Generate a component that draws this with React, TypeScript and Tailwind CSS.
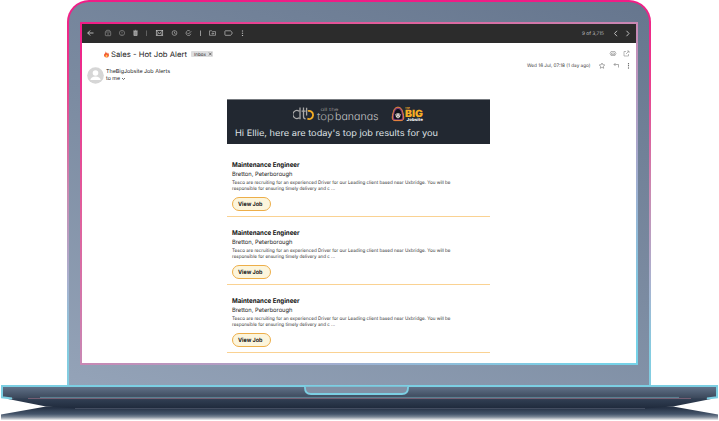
import React from "react";

const jobs = [1, 2, 3];

function Stroke({ x, y, children, o = 1 }: { x: number; y: number; children: React.ReactNode; o?: number }) {
  return (
    <g transform={`translate(${x} ${y})`} opacity={o}>
      {children}
    </g>
  );
}

function ToolbarIcons() {
  return (
    <svg width="170" height="19" viewBox="0 0 170 19" fill="none" stroke="#c4c4c4" strokeWidth="0.7">
      <Stroke x={8.5} y={9}><path d="M-2.8 0H3M-2.8 0L-.3 -2.5M-2.8 0L-.3 2.5" strokeWidth=".9" /></Stroke>
      <Stroke x={26} y={9} o={0.65}><rect x="-2.7" y="-1" width="5.4" height="3.7" rx=".5" /><path d="M-2.5 -1L-1.5 -2.7H1.5L2.5 -1M-1 1H1" /></Stroke>
      <Stroke x={40} y={9} o={0.6}><circle r="2.6" /><path d="M0 -1.4V.4M0 1V1.7" /></Stroke>
      <Stroke x={53.5} y={9} o={0.9}><path d="M-2.4 -2H2.4M-.8 -2.7H.8" /><path d="M-1.6 -1.5H1.6V2.5H-1.6Z" fill="#999" /></Stroke>
      <path d="M64.5 6.5V12" opacity=".5" />
      <Stroke x={77.5} y={9}><rect x="-3.2" y="-2.4" width="6.4" height="5" /><path d="M-3 -2L0 .5L3 -2M-3 2.3L-1 0M3 2.3L1 0" /></Stroke>
      <Stroke x={92.5} y={9} o={0.85}><circle r="2.4" /><path d="M0 -1.4V.2L1.2 .8" /></Stroke>
      <Stroke x={106.5} y={9} o={0.85}><path d="M1.4 -2.1A2.5 2.5 0 1 0 2.4 .8M-1.2 -.2L0 1L2.8 -1.8" /></Stroke>
      <path d="M118.5 6.5V12" />
      <Stroke x={130.5} y={9} o={0.85}><path d="M-3 -2.2H-.8L0 -1.4H3V2.3H-3ZM-1 .5H1.3M.3 -.5L1.3 .5L.3 1.5" /></Stroke>
      <Stroke x={146.5} y={9}><path d="M-3.1 -2.2H2Q2.6 -2.2 3.8 0Q2.6 2.3 2 2.3H-3.1Q-3.6 2.3 -3.6 1.7V-1.6Q-3.6 -2.2 -3.1 -2.2Z" /></Stroke>
      <path d="M160.5 6.5V7.6M160.5 8.7V9.8M160.5 10.9V12" strokeWidth="1.2" />
    </svg>
  );
}

function BananasLogo() {
  return (
    <svg width="86" height="20" viewBox="0 0 86 20" className="block [font-feature-settings:'cv11']">
      <g fill="none" strokeWidth="1.3">
        <path d="M6.2 5.2A4 4 0 1 0 6.2 11.8M7 1.5V13.2M10.5 1.5V10.4Q10.5 12.8 12.6 12.8M8.6 5.2H12.6M13.6 1.8V9.5" stroke="#aaa9a9" />
        <path d="M14.8 5A4.1 4.1 0 1 1 14.4 12.7" stroke="#f5ae24" strokeWidth="1.8" />
      </g>
      <text x="27.5" y="5" fontFamily="Inter, sans-serif" fontSize="4.6" fill="#8c8c8c" textLength="18" lengthAdjust="spacingAndGlyphs" textRendering="geometricPrecision">all the</text>
      <text x="24" y="13.6" fontFamily="Inter, sans-serif" fontSize="10.5" fontWeight="300" fill="#a8a8a8" textLength="17" lengthAdjust="spacingAndGlyphs" textRendering="geometricPrecision">top</text>
      <text x="42" y="13.6" fontFamily="Inter, sans-serif" fontSize="10.5" fontWeight="300" fill="#cacaca" textLength="43.5" lengthAdjust="spacingAndGlyphs" textRendering="geometricPrecision">bananas</text>
    </svg>
  );
}

function JobsiteLogo() {
  return (
    <svg width="34" height="20" viewBox="0 0 34 20" className="block">
      <path d="M7 1.2C10.4 1.2 11.3 4 12.2 8C13.4 12.6 12.6 14.6 10 14.6H4C1.4 14.6 .6 12.6 1.8 8C2.7 4 3.6 1.2 7 1.2Z" fill="#7b3a78" stroke="#f58a3c" strokeWidth="1" />
      <path d="M7 3C9.6 3 10.2 5.6 10.8 8.4C11.6 11.8 11 13.2 9.2 13.2H4.8C3 13.2 2.4 11.8 3.2 8.4C3.8 5.6 4.4 3 7 3Z" fill="#10111a" />
      <path d="M4.3 8.2Q7 6.4 9.7 8.2L9 11L7 12.4L5 11Z" fill="#e5ded9" />
      <path d="M5 8.9H6.3M7.7 8.9H9M6.3 10.8H7.7" stroke="#33272b" strokeWidth=".8" />
      <text x="14" y="2.6" fontFamily="Inter, sans-serif" fontSize="2.6" fontWeight="700" fill="#f5ae24">The</text>
      <text x="14" y="10.8" fontFamily="Inter, sans-serif" fontSize="10" fontWeight="900" fill="#f5ae24" textLength="18" lengthAdjust="spacingAndGlyphs" textRendering="geometricPrecision">BIG</text>
      <text x="15.5" y="15" fontFamily="Inter, sans-serif" fontSize="4.2" fontWeight="800" fill="#f4f4f4" textLength="16.5" lengthAdjust="spacingAndGlyphs" textRendering="geometricPrecision">Jobsite</text>
    </svg>
  );
}

function Label({ text, width, size, weight = 400, fill, height, baseline }: { text: string; width: number; size: number; weight?: number; fill: string; height: number; baseline: number }) {
  return (
    <svg width={width + 1} height={height} className="block shrink-0 overflow-visible">
      <text x="0" y={baseline} fontFamily="Inter, sans-serif" fontSize={size} fontWeight={weight} fill={fill} textLength={width} lengthAdjust="spacingAndGlyphs" textRendering="geometricPrecision">{text}</text>
    </svg>
  );
}

function Job() {
  return (
    <article className="flex h-[68px] flex-col justify-between">
      <div className="pl-[5px] pt-[10.5px]">
        <div className="pl-[0.6px]">
          <Label text="Maintenance Engineer" width={67.5} size={6.6} weight={700} fill="#111" height={10} baseline={7.2} />
          <Label text="Bretton, Peterborough" width={60.5} size={6} fill="#1c1c1c" height={9} baseline={6.2} />
          <Label text="Tesco are recruiting for an experienced Driver for our Leading client based near Uxbridge. You will be" width={218.5} size={4.7} fill="#333" height={6} baseline={4.8} />
          <Label text="responsible for ensuring timely delivery and c ..." width={103} size={4.7} fill="#333" height={6} baseline={4.8} />
        </div>
        <div className="mt-[6.5px] flex h-[13.5px] w-[39px] items-center justify-center rounded-full border border-[#edae49] bg-[#fcf5dc]">
          <Label text="View Job" width={24.5} size={5.8} weight={700} fill="#181818" height={8} baseline={6.1} />
        </div>
      </div>
      <div className="h-px shrink-0 bg-[#fad292]" />
    </article>
  );
}

function LaptopBase() {
  return (
    <svg width="719" height="36" viewBox="0 385 719 36" className="block">
      <defs>
        <linearGradient id="deck" x1="0" y1="386" x2="0" y2="398" gradientUnits="userSpaceOnUse">
          <stop stopColor="#64748b" /><stop offset="1" stopColor="#3b485b" />
        </linearGradient>
        <linearGradient id="under" x1="0" y1="398" x2="0" y2="409" gradientUnits="userSpaceOnUse">
          <stop stopColor="#334155" /><stop offset="1" stopColor="#1e293b" />
        </linearGradient>
        <linearGradient id="foot" x1="0" y1="408" x2="0" y2="420" gradientUnits="userSpaceOnUse">
          <stop stopColor="#263245" /><stop offset=".5" stopColor="#44546a" /><stop offset=".75" stopColor="#7d8998" /><stop offset="1" stopColor="#eeeeef" />
        </linearGradient>
      </defs>
      <path d="M1 414.5L46 406.5H673L718 414.5V420H1Z" fill="url(#foot)" />
      <path d="M8 399L46 406.5L75 408.5H645L673 406.5L711 399L700 397H20Z" fill="url(#under)" />
      <path d="M75 408.5H645" stroke="#4b5668" strokeWidth=".8" />
      <path d="M2 386H717V397L711 398.3H8L2 397Z" fill="url(#deck)" />
      <path d="M40 397.4H679" stroke="#5e8798" />
      <path d="M28 398.5H691" stroke="#755e73" />
      <path d="M12 398.5L2 397.3V386H717V397.3L707 398.5" fill="none" stroke="#7ccfe3" strokeWidth="2" />
      <path d="M305 386.8V388Q305 394 311 394H402Q408 394 408 388V386.8" fill="#8290a5" stroke="#7ccfe3" strokeWidth="1.8" />
    </svg>
  );
}

export default function App() {
  return (
    <main className="h-[421px] w-[719px] overflow-hidden bg-white">
      <div className="ml-[67px] h-[385px] w-[584px] rounded-t-[22px] bg-[linear-gradient(180deg,#f01c86_0%,#ea3f8d_22%,#c98bb2_50%,#abb0ce_72%,#83cde1_92%)] p-[2px] pb-0">
        <div className="h-full rounded-t-[20px] bg-[linear-gradient(20deg,#94a3b8_0%,#7b8ba1_50%,#66768e_100%)] pl-[11px] pt-[20px]">
          <div className="h-[343px] w-[558px] bg-[linear-gradient(to_bottom_right,#f01c86_0%,#e0609c_28%,#c888b4_50%,#a0aed0_73%,#76d2e8_95%)] p-[2px]">
            <section className="h-full bg-white">
              <header className="flex h-[19px] items-center justify-between bg-[#2c2c2c]">
                <ToolbarIcons />
                <div className="flex items-center pr-[2px]">
                  <Label text="9 of 3,715" width={22} size={4.9} fill="#c4c4c4" height={7} baseline={5.4} />
                  <svg width="23" height="9" fill="none" stroke="#ccc" strokeWidth=".9" className="ml-[6px]"><path d="M6 1.8L3.5 4.5L6 7.2M15.5 1.8L18 4.5L15.5 7.2" /></svg>
                </div>
              </header>
              <div className="flex h-[21px] items-center pl-[21px] pr-[5px]">
                <svg width="7" height="9" viewBox="0 0 8 9" className="mr-px mt-[2px]"><path d="M3 .8Q4 3 5 3.5L5.6 2.2Q7 4 6.8 5.8Q6.2 8 4 8Q1.4 8 1.1 5.6Q1 4 2.4 3Q3.2 2 3 .8Z" fill="#f35b31" /><path d="M4 4.4Q5.6 5.6 5 7Q4 8 3 7Q2.2 6 4 4.4Z" fill="#ffca55" /></svg>
                <Label text="Sales - Hot Job Alert" width={76} size={7.6} fill="#252525" height={11} baseline={8.6} />
                <div className="ml-[3px] mt-px flex h-[6px] w-[22px] items-center rounded-[1px] bg-[#dededf] pl-[2.5px]">
                  <Label text="Inbox" width={12} size={4.4} fill="#333" height={6} baseline={4.6} />
                  <svg width="5" height="6" stroke="#444" strokeWidth=".7" className="ml-px"><path d="M1 1.6L3.6 4.4M3.6 1.6L1 4.4" /></svg>
                </div>
                <svg width="25" height="9" fill="none" stroke="#8a8a8a" strokeWidth=".6" className="ml-auto"><path d="M5 2.5H9L10 4.5L9 6.5H5L4 4.5ZM5.5 4H8.5V5.5H5.5ZM20 2.5H18V7H22.5V5M20 5L23 2M21 2H23V4" /></svg>
              </div>
              <div className="flex h-[35px] items-start justify-between pl-[5px] pr-[5px]">
                <div className="flex">
                  <svg width="17" height="17" viewBox="0 0 17 17" className="mt-[3px]"><circle cx="8.5" cy="8.5" r="8.3" fill="#d6d6d6" /><circle cx="8.5" cy="6" r="2.8" fill="#fff" /><path d="M3.3 13Q4 9.5 8.5 9.5Q13 9.5 13.7 13Z" fill="#fff" /></svg>
                  <div className="ml-[2px] pt-[3px]">
                    <Label text="TheBigJobsite Job Alerts" width={64} size={5.6} fill="#222" height={7} baseline={6.4} />
                    <div className="flex"><Label text="to me" width={14} size={5.6} fill="#222" height={8} baseline={6.4} /><svg width="5" height="8" fill="none" stroke="#333" strokeWidth=".7"><path d="M1 4L2.5 5.5L4 4" /></svg></div>
                  </div>
                </div>
                <div className="flex items-start">
                  <Label text="Wed 16 Jul, 07:18 (1 day ago)" width={63.5} size={4.7} fill="#444" height={8} baseline={3.4} />
                  <svg width="40" height="9" fill="none" stroke="#777" strokeWidth=".6" className="-mt-[3px]"><path d="M11 2L11.8 3.7L13.8 4L12.3 5.4L12.7 7.3L11 6.3L9.3 7.3L9.7 5.4L8.2 4L10.2 3.7ZM24.5 2L23 3.5L24.5 5M23 3.5H27.5V6.5" /><path d="M37.5 2.2V3.2M37.5 4.3V5.3M37.5 6.4V7.4" stroke="#444" strokeWidth="1.1" /></svg>
                </div>
              </div>
              <div className="ml-[144.6px] w-[263.6px]">
                <div className="h-[45px] border-t border-[#777b80] bg-[#222831] pt-[6px]">
                  <div className="flex pl-[66.6px]"><BananasLogo /><div className="ml-[12px]"><JobsiteLogo /></div></div>
                  <div className="pl-[8px]"><Label text="Hi Ellie, here are today's top job results for you" width={203} size={8.8} fill="#dfe1e4" height={13} baseline={10} /></div>
                </div>
                <div className="pt-[5px]">{jobs.map((job) => <Job key={job} />)}</div>
              </div>
            </section>
          </div>
        </div>
      </div>
      <LaptopBase />
    </main>
  );
}
